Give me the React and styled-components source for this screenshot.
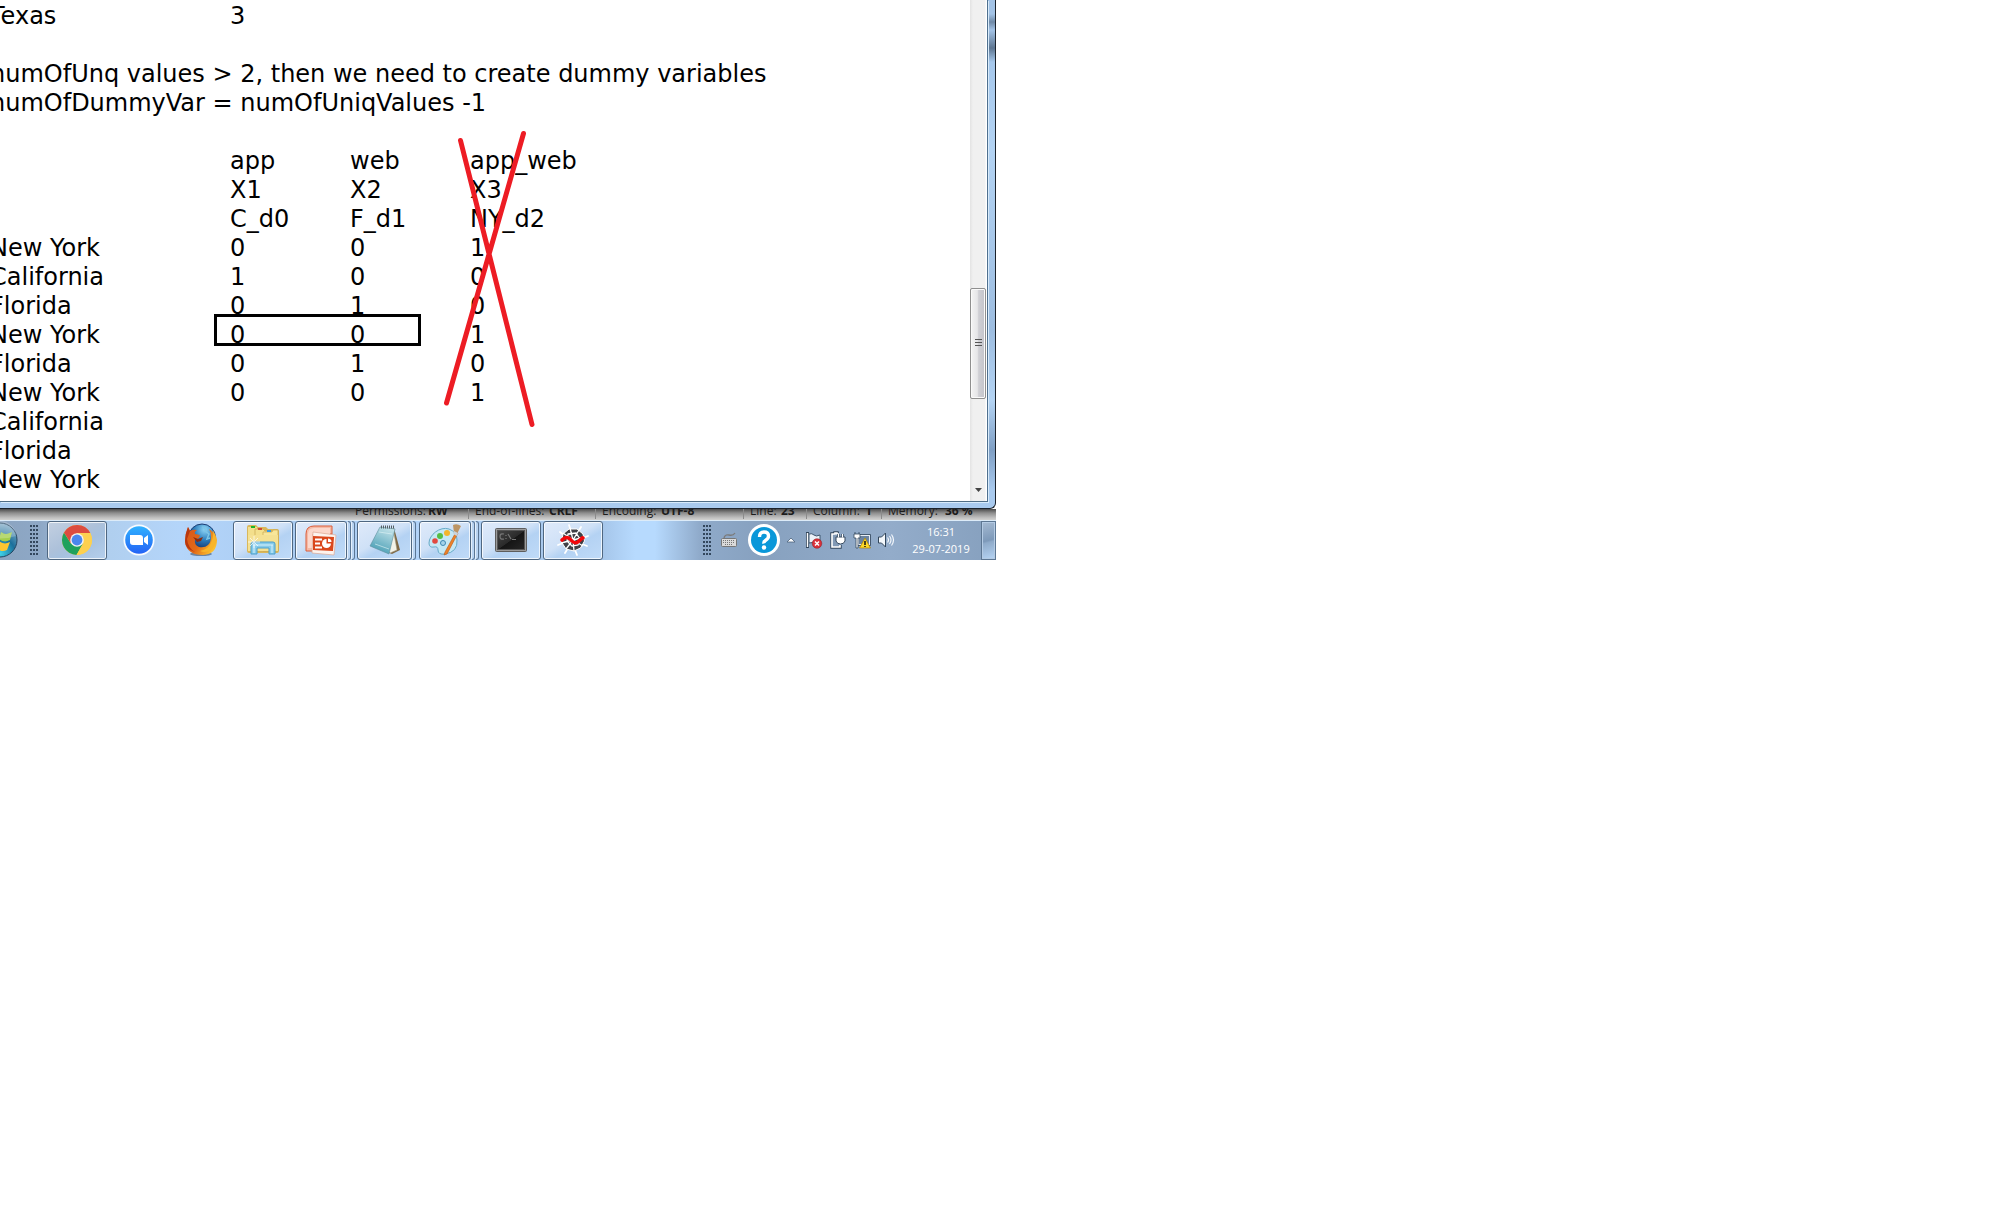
import React from "react";
import styled, { createGlobalStyle, css } from "styled-components";

const GlobalStyle = createGlobalStyle`
  *, *::before, *::after { box-sizing: border-box; }
  body { margin: 0; background: #fff; overflow-x: hidden; }
`;

const Desktop = styled.main`
  width: calc(50% - 3px);
  min-width: 960px;
  display: flex;
  flex-direction: column;
  overflow: hidden;
`;

const EditorWindow = styled.section`
  display: flex;
  border-right: 1px solid #1b222b;
  border-bottom: 1px solid #1b222b;
  border-bottom-right-radius: 6px;
  padding: 0 7px 6px 0;
  position: relative;
  z-index: 1;
  background: linear-gradient(180deg, #a3c3e6 0, #a3c3e6 14px, #6f89a6 22px, #a3c3e6 30px, #5d7590 48px, #a6c8ec 62px, #b3d3f3 150px, #9dbde0 330px, #b4d4f4 400px, #7f9fc4 450px, #a9caee 490px, #a9caee 100%);
`;

const Client = styled.div`
  flex: 1;
  display: flex;
  background: #fff;
  border-right: 1px solid #4f708f;
  border-bottom: 1px solid #4f6d86;
  box-shadow: 1px 1px 0 #d8ebfb;
`;

const Page = styled.div`
  flex: 1;
  position: relative;
  overflow: hidden;
`;

const Document = styled.textarea`
  display: block;
  width: 100%;
  height: 501px;
  margin: 0 0 0 -10px;
  padding: 2px 0 0;
  border: 0;
  outline: 0;
  resize: none;
  overflow: hidden;
  background: transparent;
  color: #000;
  font: 24px/29px Verdana, "DejaVu Sans", sans-serif;
  tab-size: 120px;
  white-space: pre;
`;

const Annotations = styled.svg`
  position: absolute;
  left: 0;
  top: 0;
  pointer-events: none;
`;

const ScrollTrack = styled.div`
  width: 17px;
  display: flex;
  flex-direction: column;
  align-items: center;
  justify-content: space-between;
  padding: 288px 1px 9px 0;
  background: linear-gradient(90deg, #e3e3e3, #f0f0f0 3px, #f0f0f0 15px, #fff 16px);
`;

const Thumb = styled.button`
  width: 16px;
  height: 111px;
  padding: 0;
  display: flex;
  align-items: center;
  justify-content: center;
  border: 1px solid #8f8f8f;
  border-radius: 2px;
  box-shadow: inset 0 0 0 1px #fafafa;
  background: linear-gradient(90deg, #f4f4f4, #e6e6e8 45%, #cfcfd4 55%, #c4c4ca);
`;

const StatusBar = styled.footer`
  height: 11px;
  display: flex;
  align-items: flex-end;
  padding-left: 355px;
  background: linear-gradient(180deg, #4c4c4c, #8e8e8e 4px, #c2c2c2 9px, #d2d2d0);
  color: #1c1c1c;
  font: 12px/16px "Open Sans", "Noto Sans", sans-serif;
  white-space: nowrap;
`;

const StatusItem = styled.div`
  display: flex;
  flex: 0 0 ${(p) => p.$width}px;
  height: 16px;
  margin-bottom: 1px;
  padding-right: 6px;

  &:not(:last-child)::after {
    content: "";
    margin-left: auto;
    border-right: 1px solid #8b8b8b;
  }
`;

const StatusLabel = styled.span`
  flex: 0 0 ${(p) => p.$width}px;
`;

const StatusValue = styled.b`
  font-weight: 700;
`;

const Taskbar = styled.nav`
  height: 40px;
  display: flex;
  align-items: stretch;
  border-top: 1px solid #dcebf8;
  background: linear-gradient(90deg, #8ba4c0 0, #8ea8c6 40px, #b0cfef 110px, #b4d5fa 180px, #a9cbf1 300px, #b2d3f8 420px, #a4c4e8 600px, #b7dafe 635px, #b7dafe 655px, #8faaca 700px, #87a1bf 760px, #93acca 890px, #86a0be 100%);
`;

const edge = css`
  border: 1px solid #4f6781;
  border-radius: 3px;
  box-shadow: inset 0 0 0 1px rgba(255, 255, 255, 0.75);
`;

const TaskButton = styled.button`
  flex: 0 0 ${(p) => p.$width}px;
  margin: 0 0 0 ${(p) => p.$gap || 0}px;
  padding: 0 0 1px;
  display: flex;
  align-items: center;
  justify-content: center;
  border: 0;
  background: transparent;
  ${(p) => p.$open && edge}
  ${(p) => p.$open && css`background: linear-gradient(150deg, #dfeafa, #cfe1f7 45%, #b4d2f3 60%, #c0dbf8);`}
  ${(p) => p.$dim && css`background: linear-gradient(150deg, #c3d0e1, #adc1da 45%, #a6c1df 60%, #b5cfec);`}
`;

const Stack = styled.span`
  flex: 0 0 4px;
  border: 1px solid #5b7694;
  border-left: 1px solid #e4f0fc;
  border-radius: 0 3px 3px 0;
  background: #b9d4f2;
`;

const OrbButton = styled.button`
  flex: 0 0 18px;
  padding: 0 0 1px;
  border: 0;
  background: transparent;
  overflow: hidden;
  display: flex;
  justify-content: flex-end;
  align-items: center;
`;

const Grip = styled.span`
  flex: 0 0 9px;
  margin: 4px 0 5px ${(p) => p.$gap}px;
  background: radial-gradient(circle at 1px 1px, #33475d 1px, transparent 1px) 0 0 / 3px 4px;
`;

const Spacer = styled.span`
  flex: 1;
`;

const Tray = styled.div`
  display: flex;
  align-items: stretch;
`;

const TrayButton = styled.button`
  flex: 0 0 ${(p) => p.$width}px;
  padding: 0 0 1px;
  border: 0;
  background: transparent;
  display: flex;
  align-items: center;
  justify-content: center;
`;

const Clock = styled.time`
  flex: 0 0 86px;
  padding: 2px 0 0 6px;
  text-align: center;
  color: #fff;
  font: 11px/17px "Open Sans", "Noto Sans", sans-serif;
`;

const ShowDesktop = styled.button`
  flex: 0 0 15px;
  padding: 0;
  border: 1px solid #5d7793;
  box-shadow: inset 0 0 0 1px #b4cbe4;
  background: linear-gradient(165deg, #a5bad2, #7d99b9 50%, #8fabca 55%, #b6d4f4);
`;

const TEXT = [
  "Texas\t\t3",
  "",
  "numOfUnq values > 2, then we need to create dummy variables",
  "numOfDummyVar = numOfUniqValues -1",
  "",
  "\t\tapp\tweb\tapp_web",
  "\t\tX1\tX2\tX3",
  "\t\tC_d0\tF_d1\tNY_d2",
  "New York\t\t0\t0\t1",
  "California\t\t1\t0\t0",
  "Florida\t\t0\t1\t0",
  "New York\t\t0\t0\t1",
  "Florida\t\t0\t1\t0",
  "New York\t\t0\t0\t1",
  "California",
  "Florida",
  "New York",
].join("\n");

const STATUS = [
  { label: "Permissions:", value: "RW", labelWidth: 73, width: 120 },
  { label: "End-of-lines:", value: "CRLF", labelWidth: 74, width: 127 },
  { label: "Encoding:", value: "UTF-8", labelWidth: 59, width: 148 },
  { label: "Line:", value: "23", labelWidth: 31, width: 63 },
  { label: "Column:", value: "1", labelWidth: 52, width: 75 },
  { label: "Memory:", value: "36 %", labelWidth: 57, width: 100 },
];

const Orb = () => (
  <svg width="36" height="38" viewBox="0 0 36 38" style={{ flexShrink: 0 }}>
    <defs>
      <radialGradient id="orb" cx=".5" cy=".9" r=".9">
        <stop offset="0" stopColor="#3fd4e8" />
        <stop offset=".5" stopColor="#1b6f9b" />
        <stop offset="1" stopColor="#8fb3cc" />
      </radialGradient>
    </defs>
    <circle cx="18" cy="19" r="17" fill="url(#orb)" stroke="#24445f" />
    <path d="M19 11c4 3 7 2 11 0l-2 8c-4 2-7 2-11-1z" fill="#a4cf4c" />
    <path d="M17 20c4 3 7 3 11 1l-3 8c-4 2-7 1-10-1z" fill="#fdc62f" />
    <path d="M4 10c5-2 9-1 13 1l-2 7c-4-2-8-2-12-1z" fill="#ee6435" />
    <path d="M3 19c4-1 8-1 12 1l-2 7c-4-2-7-2-10-1z" fill="#4e9be0" />
    <path d="M2 15a16 15 0 0 1 32 0q-16 5-32 0z" fill="#fff" opacity=".22" />
  </svg>
);

const Chrome = () => (
  <svg width="32" height="32" viewBox="0 0 32 32">
    <circle cx="16" cy="16" r="15" fill="#fdd04f" />
    <path d="M3 8.500A15 15 0 0 0 15.500 31L22.100 19.500 16 16 9.900 19.500z" fill="#1fa15d" />
    <path d="M16 9h13.300A15 15 0 0 1 15.500 31L22 19.500z" fill="#fdd04f" />
    <path d="M3 8.500A15 15 0 0 1 29.300 9H16L10 19.500z" fill="#dc4c3f" />
    <circle cx="16" cy="16" r="6.800" fill="#f3f3f3" />
    <circle cx="16" cy="16" r="5.400" fill="#4a87ee" />
  </svg>
);

const Camera = () => (
  <svg width="32" height="32" viewBox="0 0 32 32">
    <defs>
      <linearGradient id="cam" x2="0" y2="1">
        <stop stopColor="#2fb1ff" />
        <stop offset="1" stopColor="#2463f5" />
      </linearGradient>
    </defs>
    <circle cx="16" cy="16" r="15.500" fill="#f8fbff" />
    <circle cx="16" cy="16" r="13.800" fill="url(#cam)" />
    <path d="M7 11h10a3 3 0 0 1 3 3v7H10a3 3 0 0 1-3-3zM21 14l4-3v10l-4-3z" fill="#fff" />
  </svg>
);

const Firefox = () => (
  <svg width="34" height="34" viewBox="0 0 34 34">
    <defs>
      <radialGradient id="globe" cx=".6" cy=".2" r=".8">
        <stop stopColor="#8fd5f6" />
        <stop offset=".5" stopColor="#2a7cbc" />
        <stop offset="1" stopColor="#142b62" />
      </radialGradient>
      <linearGradient id="fox" x1="0" y1="0" x2="1" y2=".6">
        <stop stopColor="#d7541c" />
        <stop offset=".6" stopColor="#e26a17" />
        <stop offset="1" stopColor="#fbbf2f" />
      </linearGradient>
    </defs>
    <ellipse cx="17" cy="31" rx="11" ry="2" fill="#3d4f66" opacity=".6" />
    <circle cx="18" cy="14.500" r="13.500" fill="url(#globe)" stroke="#1c3c74" />
    <path d="M18 4q4 1 3 4l4 3-2 5 3-1" fill="none" stroke="#7cc4e6" strokeWidth="1.500" />
    <path d="M4 4l2 4q3-2 7-1-3 2-2 4l5 1-1 3-4 2q-1 5 4 7 6 1 9-2 3-3 3-8 0-5-2-8 7 4 8 11 0 14-14 15Q3 32 1 19 1 11 4 4z" fill="url(#fox)" />
    <path d="M29 7q6 10 0 18-7 6-13 3 9-2 11-8 3-6 2-13z" fill="#f8b52a" />
    <path d="M4 4l2 4-3 8q1 9 8 13Q1 26 1 18 1 11 4 4z" fill="#b9380f" />
    <path d="M9 14l5 2 5-2-2 4-4 1z" fill="#8f2a0d" />
  </svg>
);

const Explorer = () => (
  <svg width="34" height="32" viewBox="0 0 34 32">
    <path d="M1 3q0-2 2-2h7l2 2h8l2 2h9q2 0 2 2v20q0 2-2 2H3q-2 0-2-2z" fill="#d9b75b" />
    <path d="M2 3h9v24H2z" fill="#f3df8c" />
    <path d="M9 5h8l2 2h7v20H9z" fill="#f4e08d" stroke="#c9a850" strokeWidth=".7" />
    <path d="M17 8h9l1-2h5v21H17z" fill="#f8e69a" stroke="#c9a850" strokeWidth=".7" />
    <path d="M2 11h30v16H2z" fill="#f5e193" />
    <path d="M5 2h4v2H5z" fill="#1bb52a" />
    <path d="M12 4h4v2h-4z" fill="#d04a35" />
    <path d="M21 6h4v2h-4z" fill="#359be8" />
    <path d="M5 30V20q0-2 2-2h20q2 0 2 2v10h-6v-6H11v6z" fill="#87cbea" stroke="#4a9ecb" />
    <path d="M7 21h20M8 21v8M26 21v8" stroke="#d7f2fc" fill="none" />
    <path d="M8 12v12M2 18h12M4 14l8 8M12 14l-8 8" stroke="#fff" opacity=".7" />
  </svg>
);

const PowerPoint = () => (
  <svg width="32" height="32" viewBox="0 0 32 32">
    <path d="M1 27V10q0-8 8-8h18v8H9v17z" fill="#f5b9a5" stroke="#db5c39" />
    <path d="M3 24V10q0-6 6-6h16v6H7v14z" fill="#fcd8cc" />
    <path d="M8 8l23 3-2 20-22-2z" fill="#fdf3ee" stroke="#dda894" strokeWidth=".7" />
    <path d="M8 12l21 1-1 14-20-1z" fill="#da471c" />
    <path d="M10 15.500h7M10 19.500h5M10 23.500h7" stroke="#fff" strokeWidth="2" />
    <circle cx="21.500" cy="19.500" r="4.500" fill="#fff" />
    <path d="M21.500 19.500V14l6 1v4.500z" fill="#da471c" />
    <path d="M23 18v-3.500q3.500 0 3.500 3.500z" fill="#fff" />
  </svg>
);

const Notepad = () => (
  <svg width="32" height="32" viewBox="0 0 32 32">
    <defs>
      <linearGradient id="note" x1=".7" x2=".3" y2="1">
        <stop stopColor="#c4e3ea" />
        <stop offset="1" stopColor="#439bb2" />
      </linearGradient>
    </defs>
    <path d="M25 4l6 22-8 4-5-2z" fill="#7f6843" />
    <path d="M24 4l4 22-7 3-3-3z" fill="#f3f3e8" stroke="#a09a85" strokeWidth=".6" />
    <path d="M11 3l15 2-6 25L1 22z" fill="url(#note)" stroke="#5e8e9c" strokeWidth=".6" />
    <path d="M12 3h14" stroke="#555f63" strokeWidth="3" strokeDasharray="1 1" />
    <path d="M10 8l13 2M6 20l14 5" stroke="#e2f6f8" opacity=".6" />
  </svg>
);

const Paint = () => (
  <svg width="34" height="34" viewBox="0 0 34 34">
    <path d="M21 6C12 3 1 12 1 20q0 5 5 4 4-1 4 3 0 5 7 4 13-2 12-14 0-8-8-11z" fill="#c5e8f4" stroke="#67aac7" />
    <circle cx="7" cy="18" r="2.800" fill="#e1493f" />
    <circle cx="12" cy="13" r="3" fill="#55bd45" />
    <circle cx="19" cy="10" r="3" fill="#f4b52b" />
    <circle cx="15" cy="20" r="2.500" fill="#a5d3ea" stroke="#3f88b3" />
    <path d="M28 9l2 1-11 21-3 1 1-3z" fill="#ed8128" stroke="#b85a16" strokeWidth=".6" />
    <path d="M25 2q4-2 8 1l-4 8-3-1z" fill="#bd9565" />
    <path d="M26 8l4 2-1 3-4-2z" fill="#c9d3da" />
  </svg>
);

const Terminal = () => (
  <svg width="32" height="26" viewBox="0 0 32 26">
    <defs>
      <linearGradient id="term" x1="0" x2="1" y2="1">
        <stop stopColor="#454545" />
        <stop offset=".5" stopColor="#2a2a2a" />
        <stop offset=".52" stopColor="#151515" />
        <stop offset="1" stopColor="#262626" />
      </linearGradient>
    </defs>
    <rect x=".5" y="1.500" width="31" height="23" rx="1" fill="#9b9b9b" stroke="#5d5d5d" />
    <rect x="2.500" y="3.500" width="27" height="19" fill="url(#term)" stroke="#555" />
    <path d="M9 7Q5 6 5 9.500T9 12M11 8v1M11 11v1M13 7l3 5M17 12.500h4" fill="none" stroke="#777" strokeWidth="1.200" />
  </svg>
);

const Spyder = () => (
  <svg width="32" height="32" viewBox="0 0 32 32">
    <path d="M12 1l2 6M24 3l-3 5M31 12l-5 2M30 22l-5-2M20 31l-2-5M8 29l3-5M1 21l5-2M3 8l5 4" stroke="#fff" strokeWidth="1.800" strokeLinecap="round" />
    <path d="M12 5h8l6 5 1.500 7-4 7-6.500 3-8-2-4.500-7 1.500-8z" fill="#3f4147" stroke="#fff" />
    <path d="M16 16L13 4M16 16L22 6M16 16l12-3M16 16l10 6M16 16l1 11M16 16l-7 9M16 16L4 19M16 16L6 9M11 10l8-1 4 6-2 6-6 1-5-5z" stroke="#fff" strokeWidth="1.300" fill="none" />
    <path d="M5 16q5-5 9 0t8 1 4-3" fill="none" stroke="#f2070b" strokeWidth="3.600" strokeLinecap="round" />
  </svg>
);

const Keyboard = () => (
  <svg width="18" height="16" viewBox="0 0 18 16">
    <path d="M4 6q1-4 5-3t6-2" fill="none" stroke="#7b7b7b" strokeWidth="1.300" />
    <rect x="1.500" y="6.500" width="15" height="8" rx="1" fill="#dadada" stroke="#777" />
    <path d="M3 8.500h12M3 10.500h12M5 12.500h8" stroke="#777" strokeDasharray="1 1" />
  </svg>
);

const Help = () => (
  <svg width="32" height="32" viewBox="0 0 32 32">
    <circle cx="16" cy="16" r="16" fill="#fff" />
    <circle cx="16" cy="16" r="13" fill="#0997d9" />
    <path d="M11.500 13q0-5 4.500-5t4.500 4q0 2.500-2.500 4t-2 3.500" fill="none" stroke="#fff" strokeWidth="3.400" />
    <circle cx="16" cy="23.500" r="2.200" fill="#fff" />
  </svg>
);

const Chevron = () => (
  <svg width="10" height="6" viewBox="0 0 10 6">
    <path d="M1 5l4-4 4 4z" fill="#fff" stroke="#4d637c" strokeWidth=".8" />
  </svg>
);

const Flag = () => (
  <svg width="18" height="18" viewBox="0 0 18 18">
    <path d="M2.500 1v16" stroke="#33475c" strokeWidth="3" />
    <path d="M4 3q3-1 5 1t6 0v8q-3 1-5 0t-6 0z" fill="#edf2f8" stroke="#3f566f" />
    <path d="M2.500 2v14" stroke="#fff" strokeWidth="1.400" />
    <circle cx="12" cy="12.500" r="4.800" fill="#d9303a" stroke="#8b1b20" strokeWidth=".5" />
    <path d="M10 10.500l4 4M14 10.500l-4 4" stroke="#fff" strokeWidth="1.500" />
  </svg>
);

const Power = () => (
  <svg width="18" height="18" viewBox="0 0 18 18">
    <path d="M10 3H8V2H6v1H3v13h8v-2" fill="none" stroke="#33475c" strokeWidth="3.400" />
    <path d="M10 3H8V2H6v1H3v13h8v-2" fill="#8199b5" stroke="#fff" strokeWidth="1.600" />
    <path d="M7 6h9v4q-1 3-4.500 3T7 10z" fill="#fff" stroke="#33475c" />
    <path d="M9.500 6V3M13.500 6V3" stroke="#33475c" strokeWidth="2.600" />
    <path d="M9.500 6.500V3M13.500 6.500V3" stroke="#fff" strokeWidth="1.200" />
  </svg>
);

const Network = () => (
  <svg width="18" height="18" viewBox="0 0 18 18">
    <rect x="5.500" y="4.500" width="11" height="9" fill="#6b839f" stroke="#33475c" strokeWidth="2.600" />
    <rect x="5.500" y="4.500" width="11" height="9" fill="#6b839f" stroke="#e8eef5" />
    <path d="M1 3h6v4H5v10H3V7H1zM2 3V1M6 3V1" fill="#fff" stroke="#33475c" strokeWidth=".8" />
    <path d="M12 7l5.500 10h-11z" fill="#fdd928" stroke="#a98008" strokeWidth=".7" />
    <path d="M12 10v4M12 15v1" stroke="#111" strokeWidth="1.500" />
  </svg>
);

const Sound = () => (
  <svg width="18" height="18" viewBox="0 0 18 18">
    <path d="M1.500 6h3l4-4v14l-4-4h-3z" fill="#f3f7fb" stroke="#33475c" />
    <path d="M10.500 6.500q2 2.500 0 5M12.500 5q3 4 0 8M14.500 3.500q4 5.500 0 11" fill="none" stroke="#f3f7fb" strokeWidth="1.200" />
  </svg>
);

export default function App() {
  return (
    <>
      <GlobalStyle />
      <Desktop>
        <EditorWindow>
          <Client>
            <Page>
              <Document aria-label="Text editor" defaultValue={TEXT} spellCheck={false} wrap="off" />
              <Annotations width="600" height="440" aria-hidden="true">
                <rect x="215.500" y="315.500" width="204" height="29" fill="none" stroke="#000" strokeWidth="3" />
                <path d="M460.500 140.500L532 424.500M523.500 133.500L446.500 403" stroke="#ed1c24" strokeWidth="5" strokeLinecap="round" />
              </Annotations>
            </Page>
            <ScrollTrack>
              <Thumb aria-label="Scroll">
                <svg width="7" height="9"><path d="M0 .5h7M0 3.500h7M0 6.500h7" stroke="#555" /></svg>
              </Thumb>
              <svg width="7" height="4"><path d="M0 0h7L3.500 4z" fill="#444" /></svg>
            </ScrollTrack>
          </Client>
        </EditorWindow>
        <StatusBar>
          {STATUS.map((s) => (
            <StatusItem key={s.label} $width={s.width}>
              <StatusLabel $width={s.labelWidth}>{s.label}</StatusLabel>
              <StatusValue>{s.value}</StatusValue>
            </StatusItem>
          ))}
        </StatusBar>
        <Taskbar aria-label="Taskbar">
          <OrbButton aria-label="Start"><Orb /></OrbButton>
          <Grip $gap={12} />
          <TaskButton $width={60} $gap={8} $open $dim aria-label="Chrome"><Chrome /></TaskButton>
          <TaskButton $width={62} $gap={1} aria-label="Zoom"><Camera /></TaskButton>
          <TaskButton $width={62} aria-label="Firefox"><Firefox /></TaskButton>
          <TaskButton $width={60} $gap={1} $open aria-label="Explorer"><Explorer /></TaskButton>
          <TaskButton $width={52} $gap={2} $open aria-label="PowerPoint"><PowerPoint /></TaskButton>
          <Stack /><Stack />
          <TaskButton $width={55} $gap={2} $open aria-label="Notepad"><Notepad /></TaskButton>
          <Stack />
          <TaskButton $width={52} $gap={3} $open aria-label="Paint"><Paint /></TaskButton>
          <Stack /><Stack />
          <TaskButton $width={60} $gap={2} $open aria-label="Command Prompt"><Terminal /></TaskButton>
          <TaskButton $width={60} $gap={2} $open aria-label="Spyder"><Spyder /></TaskButton>
          <Spacer />
          <Grip $gap={0} />
          <Tray>
            <TrayButton $width={33} aria-label="Keyboard"><Keyboard /></TrayButton>
            <TrayButton $width={38} aria-label="Help"><Help /></TrayButton>
            <TrayButton $width={16} aria-label="Show hidden icons"><Chevron /></TrayButton>
            <TrayButton $width={30} aria-label="Action Center"><Flag /></TrayButton>
            <TrayButton $width={18} aria-label="Power"><Power /></TrayButton>
            <TrayButton $width={30} aria-label="Network"><Network /></TrayButton>
            <TrayButton $width={18} aria-label="Volume"><Sound /></TrayButton>
            <Clock>16:31<br />29-07-2019</Clock>
            <ShowDesktop aria-label="Show desktop" />
          </Tray>
        </Taskbar>
      </Desktop>
    </>
  );
}
